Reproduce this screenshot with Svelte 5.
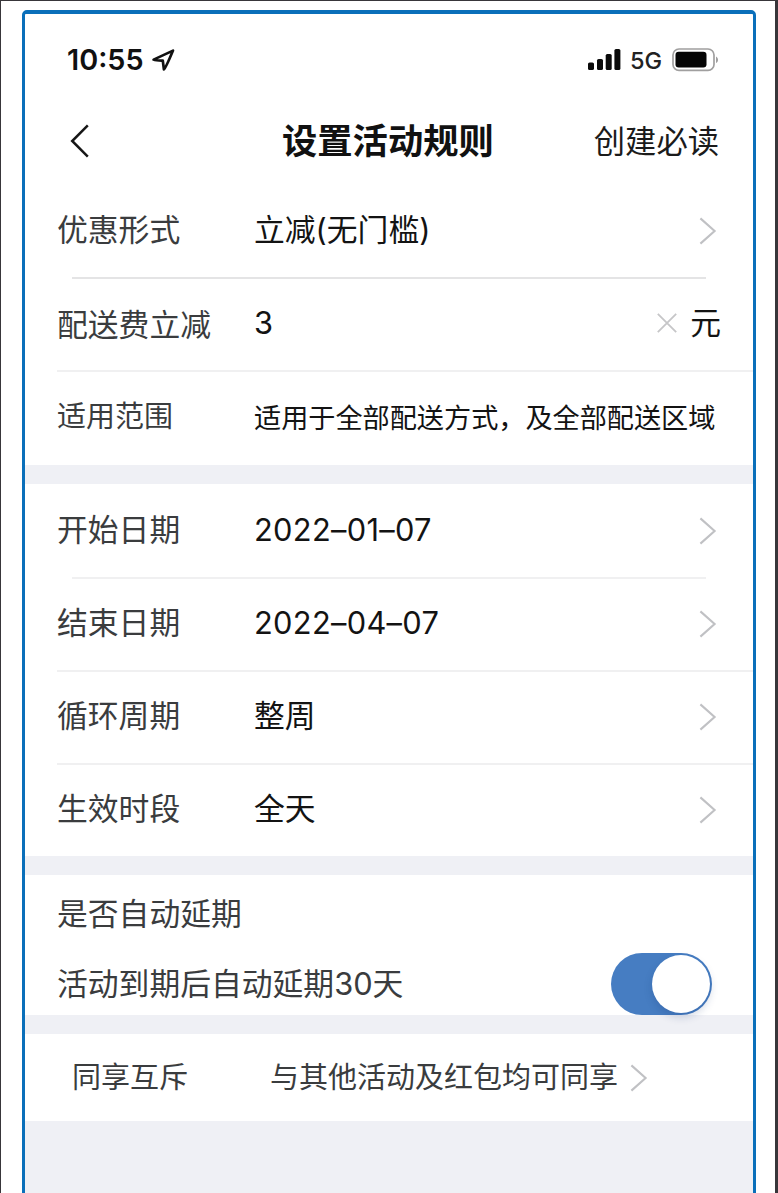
<script>
  const discount = [
    { label: '优惠形式', value: '立减(无门槛)', arrow: true },
    { label: '配送费立减', value: '3', unit: '元', divider: 'inset strong' },
    { label: '适用范围', value: '适用于全部配送方式，及全部配送区域', small: true, divider: 'wide' },
  ];
  const schedule = [
    { label: '开始日期', value: '2022–01–07', date: true, arrow: true },
    { label: '结束日期', value: '2022–04–07', date: true, arrow: true, divider: 'inset' },
    { label: '循环周期', value: '整周', arrow: true, divider: 'wide' },
    { label: '生效时段', value: '全天', arrow: true, divider: 'wide' },
  ];
  let autoExtend = $state(true);
</script>

{#snippet chevron()}
  <svg class="chevron" width="18" height="28" viewBox="0 0 18 28" fill="none" stroke="currentColor" stroke-width="2.1">
    <path d="M1.4 1.4 15.6 14 1.4 26.6" />
  </svg>
{/snippet}

{#snippet row(item)}
  <div class="row {item.divider ?? ''}" class:small={item.small}>
    <span class="label">{item.label}</span>
    <span class="value" class:date={item.date}>{item.value}</span>
    {#if item.arrow}{@render chevron()}{/if}
    {#if item.unit}
      <svg class="clear" width="20" height="20" viewBox="0 0 20 20" fill="none" stroke="#c6c6c8" stroke-width="1.8">
        <path d="M.8.8 19.2 19.2M19.2.8.8 19.2" />
      </svg>
      <span class="unit">{item.unit}</span>
    {/if}
  </div>
{/snippet}

<div class="frame">
  <main class="phone">
    <header>
      <div class="status">
        <span class="time">10:55</span>
        <svg class="location" width="24" height="24" viewBox="0 0 24 24" fill="none" stroke="#111" stroke-width="2.7" stroke-linejoin="round">
          <path d="M22 2.6 2.6 11.6Q5 12.7 11.8 12.6L12.9 21.4Q14.5 20.6 22 2.6Z" />
        </svg>
        <svg class="signal" width="33" height="22" viewBox="0 0 33 22" fill="#0a0a0a">
          <rect x="0" y="13.5" width="6" height="7.5" rx="1.6" />
          <rect x="9" y="10" width="6" height="11" rx="1.6" />
          <rect x="17.7" y="5" width="6" height="16" rx="1.6" />
          <rect x="26.4" y="0" width="6" height="21" rx="1.6" />
        </svg>
        <span class="network">5G</span>
        <svg class="battery" width="47" height="24" viewBox="0 0 47 24">
          <rect x="1" y="1" width="41" height="21.4" rx="6" fill="none" stroke="#a09f9f" stroke-width="1.7" />
          <rect x="3.5" y="3.8" width="31" height="15.6" rx="3.2" fill="#050505" />
          <path d="M44.2 8.5c2.2 1.4 2.2 5.4 0 6.6Z" fill="#8a8989" />
        </svg>
      </div>
      <nav>
        <svg class="back" width="20" height="34" viewBox="0 0 20 34" fill="none" stroke="#161616" stroke-width="2.5">
          <path d="M17.8 1.4 2.2 17 17.8 32.6" />
        </svg>
        <h1>设置活动规则</h1>
        <span class="guide">创建必读</span>
      </nav>
    </header>

    <section>
      {#each discount as item}{@render row(item)}{/each}
    </section>
    <section>
      {#each schedule as item}{@render row(item)}{/each}
    </section>
    <section class="extend">
      <div class="question">是否自动延期</div>
      <div class="switch-row">
        <span>活动到期后自动延期30天</span>
        <button class="switch" class:on={autoExtend} aria-label="自动延期" onclick={() => (autoExtend = !autoExtend)}></button>
      </div>
    </section>
    <section class="share">
      <span class="share-label">同享互斥</span>
      <span>与其他活动及红包均可同享</span>
      {@render chevron()}
    </section>
  </main>
</div>

<style>
  :global(body) {
    background: #fff;
    overflow: hidden;
  }
  .frame {
    box-sizing: border-box;
    height: 1193px;
    padding: 9px 19px 0 21px;
    border: solid #38363a;
    border-width: 1px 3px 0 1px;
    font-family: Inter, 'Noto Sans CJK SC', sans-serif;
    overflow: hidden;
  }
  .phone {
    box-sizing: border-box;
    width: 734px;
    height: 1200px;
    border: 3px solid #0a6fba;
    border-top-width: 4px;
    border-radius: 5px;
    background: #eff0f5;
    display: flex;
    flex-direction: column;
    gap: 19px;
    overflow: hidden;
  }
  header {
    background: #fff;
    height: 170px;
    margin-bottom: -19px;
  }
  .status {
    display: flex;
    align-items: center;
    height: 91px;
    padding: 0 34px 0 42px;
  }
  .time {
    font-size: 28.8px;
    font-weight: 600;
    color: #111;
    width: 77px;
    white-space: nowrap;
  }
  .location {
    margin-left: 7px;
  }
  .signal {
    margin-left: auto;
  }
  .network {
    font-size: 23.5px;
    font-weight: 500;
    color: #222;
    margin: 2px 10px 0 9px;
  }
  nav {
    display: flex;
    align-items: center;
    height: 72px;
    padding: 0 34px 0 45px;
  }
  h1 {
    margin: 2px 0 0 192px;
    font-size: 35.3px;
    line-height: 50px;
    font-weight: 700;
    color: #111;
  }
  .guide {
    margin: 1px 0 0 auto;
    font-size: 31.3px;
    line-height: 50px;
    color: #1b1b1b;
  }
  section {
    background: #fff;
    color: #3a3c3e;
    font-size: 30.8px;
    line-height: 46px;
  }
  .row {
    box-sizing: border-box;
    display: flex;
    align-items: center;
    height: 93px;
    padding: 0 36px 0 32px;
    background: linear-gradient(#f0f0f1, #f0f0f1) no-repeat;
    background-size: 0 0;
  }
  .inset {
    background-position: 47px 0;
    background-size: 634px 2px;
  }
  .strong {
    padding-top: 1px;
    background-image: linear-gradient(#e4e4e5, #e4e4e5);
  }
  .wide {
    background-position: 32px 0;
    background-size: 696px 2px;
  }
  .label {
    width: 197px;
    padding-bottom: 2px;
    white-space: nowrap;
  }
  .strong .label {
    padding: 2px 0 0;
  }
  .value {
    color: #131313;
    padding-bottom: 2px;
    white-space: nowrap;
  }
  .date {
    letter-spacing: 0.3px;
  }
  .small {
    height: 95px;
    font-size: 29px;
  }
  .small .label {
    padding-bottom: 1px;
  }
  .small .value {
    font-size: 27.15px;
    padding: 2px 0 0;
  }
  .chevron {
    margin-left: auto;
    color: #c0c1c4;
  }
  .clear {
    margin: 0 0 2px auto;
  }
  .unit {
    margin: 0 -4px 2px 13px;
    color: #131313;
  }
  .extend {
    height: 140px;
    padding-left: 32px;
  }
  .question {
    height: 78px;
    line-height: 78px;
  }
  .switch-row {
    display: flex;
    align-items: center;
    height: 62px;
    padding-right: 41px;
  }
  .switch {
    margin-left: auto;
    flex: none;
    width: 101px;
    height: 62px;
    padding: 2px;
    border: 0;
    border-radius: 32px;
    background: #d5d5d8;
    display: flex;
  }
  .switch.on {
    background: #467dc2;
    justify-content: flex-end;
  }
  .switch::after {
    content: '';
    width: 58px;
    height: 58px;
    border-radius: 50%;
    background: #fff;
    box-shadow: 0 4px 8px rgba(20, 50, 110, 0.2);
  }
  .share {
    display: flex;
    align-items: center;
    height: 87px;
    padding-left: 47px;
    font-size: 29px;
  }
  .share-label {
    width: 198px;
  }
  .share .chevron {
    margin-left: 12px;
  }
</style>
